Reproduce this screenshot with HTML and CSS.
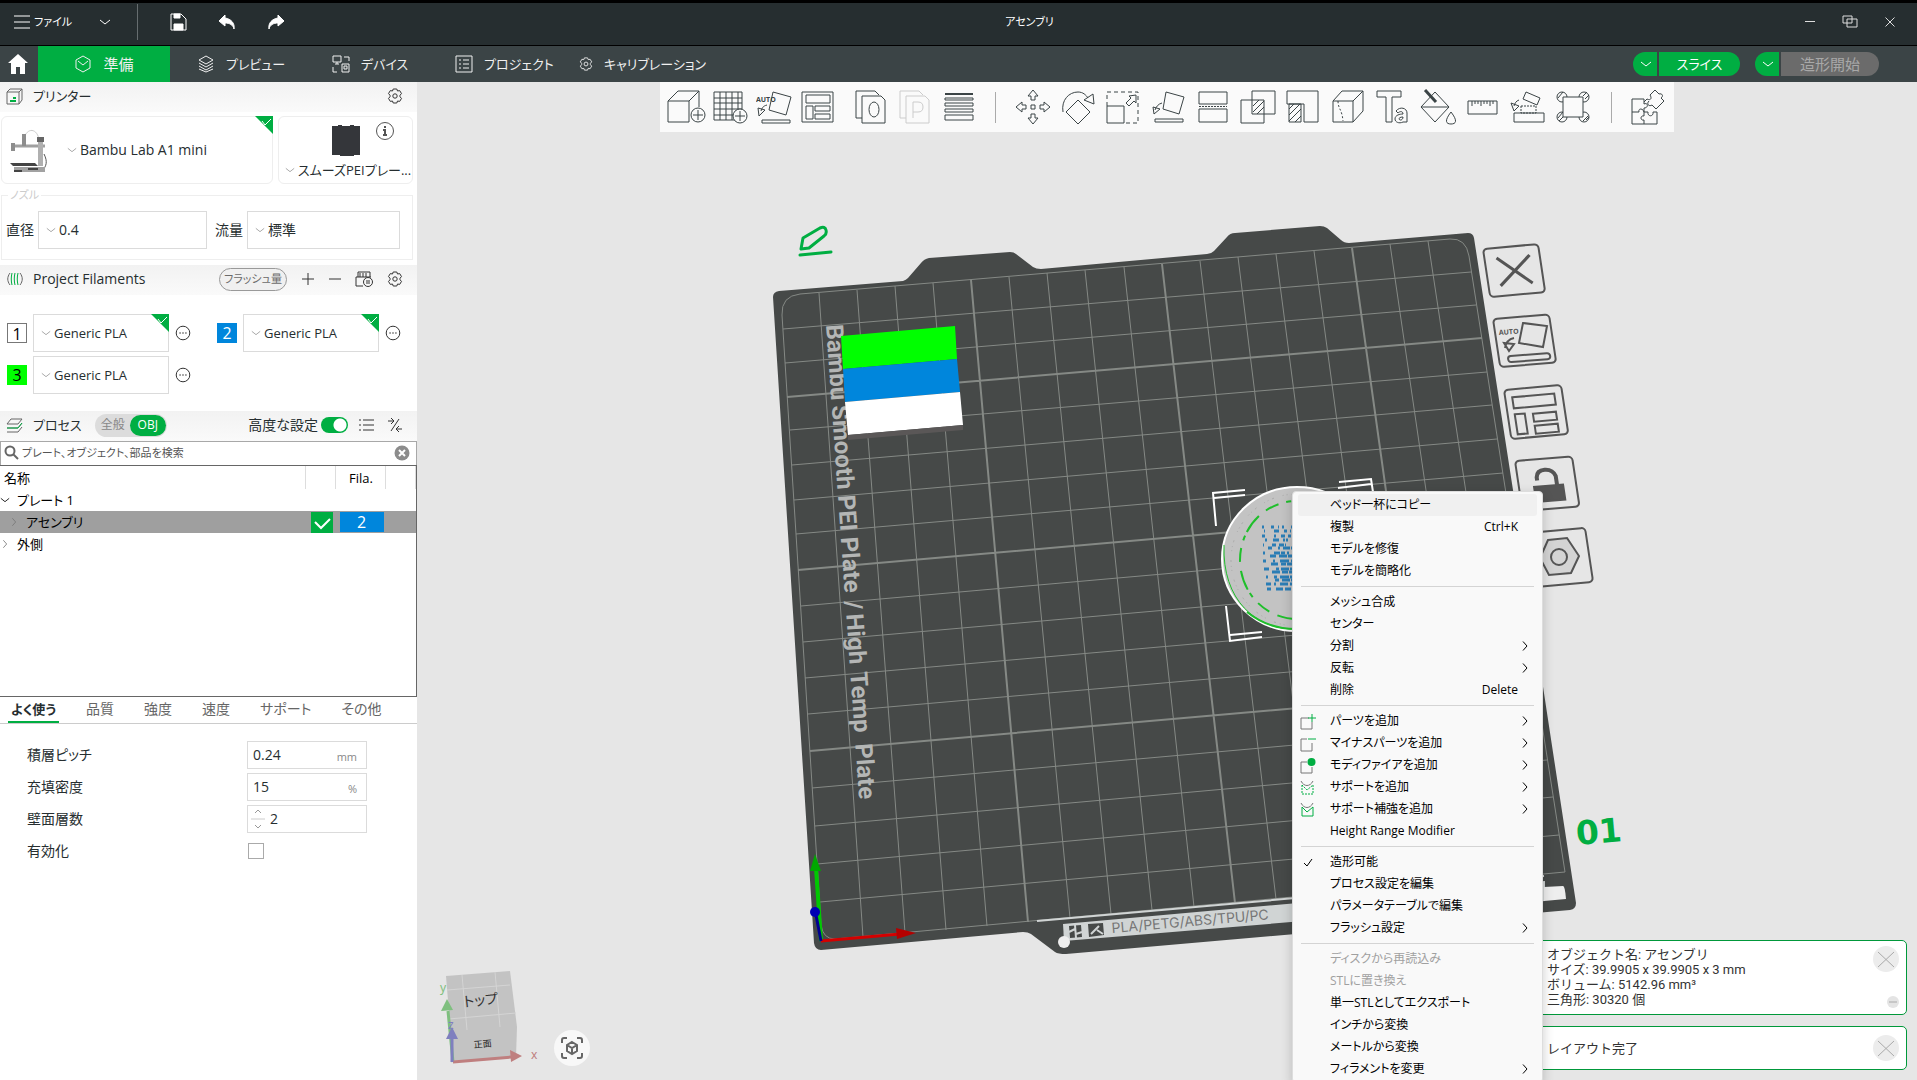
FILE: index.html
```html
<!DOCTYPE html>
<html lang="ja">
<head>
<meta charset="utf-8">
<title>アセンブリ</title>
<link rel="stylesheet" href="styles.css">
</head>
<body>
<svg class="defs" aria-hidden="true">
  <symbol id="chev" viewBox="0 0 12 12"><path d="M1 4l5 4 5-4"/></symbol>
  <symbol id="right" viewBox="0 0 12 12"><path d="M4 1.500l4 4.500-4 4.500"/></symbol>
  <symbol id="tick" viewBox="0 0 18 18"><path d="M0 0h18v18z" fill="#00ae42" stroke="none"/><path d="M7 5l3 4 6-6" stroke="#fff"/></symbol>
  <symbol id="gear" viewBox="0 0 16 16"><path d="M6.200 1h3.600l.7 2 2.200-.4 1.800 3L13 7.200v1.600l1.500 1.600-1.800 3-2.200-.4-.7 2H6.200l-.7-2-2.200.4-1.800-3L3 8.800V7.200L1.500 5.600l1.800-3 2.200.4z"/><circle cx="8" cy="8" r="2.200"/></symbol>
  <symbol id="more" viewBox="0 0 16 16"><circle cx="8" cy="8" r="6.800"/><path d="M4.300 8h1.600M7.200 8h1.600M10.100 8h1.600"/></symbol>
  <symbol id="lay" viewBox="0 0 36 36"><path d="M16 3l18 5-5 17-16-5zM5 30h28v3H5zM12 14c-4 1-6 4-7 7M3 18l1 7 6-5z"/></symbol>
</svg>

<header class="titlebar">
  <button class="file"><svg width="16" height="14"><path d="M0 1h16M0 7h16M0 13h16"/></svg>ファイル<svg class="drop" width="12" height="12"><use href="#chev"/></svg></button>
  <span class="bar"></span>
  <div class="quick">
    <button aria-label="保存"><svg width="17" height="18"><path d="M1 1h10l5 5v11H1z"/><path d="M4 11h9v6H4zM4 1h6v4H4z" fill="#fff"/></svg></button>
    <button aria-label="元に戻す"><svg width="18" height="16"><path d="M7 1L1 7l6 5V9c5 0 8 2 9 6 1-6-3-10-9-11z" fill="#fff"/></svg></button>
    <button aria-label="やり直す"><svg width="18" height="16"><path d="M11 1l6 6-6 5V9c-5 0-8 2-9 6-1-6 3-10 9-11z" fill="#fff"/></svg></button>
  </div>
  <h1>アセンブリ</h1>
  <div class="win">
    <button aria-label="最小化"><svg width="12" height="12"><path d="M1 5.500h10"/></svg></button>
    <button aria-label="元のサイズに戻す"><svg width="16" height="14"><path d="M1 1h9v7H1zM5 4h10v8H5z"/></svg></button>
    <button aria-label="閉じる"><svg width="12" height="12"><path d="M1.500 1.500l9 9M10.500 1.500l-9 9"/></svg></button>
  </div>
</header>

<nav class="tabs">
  <button class="home" aria-label="ホーム"><svg width="20" height="20"><path d="M10 0L0 9h3v11h5v-7h4v7h5V9h3z" fill="#fff" stroke="none"/></svg></button>
  <button class="tab on"><svg width="18" height="18"><path d="M9 1l7 4v8l-7 4-7-4V5zM4 6l5 4 5-4"/></svg>準備</button>
  <button class="tab t2"><svg width="18" height="18"><path d="M9 1l7 4-7 4-7-4zM2 8l7 4 7-4M2 11l7 4 7-4M2 14l7 3 7-3"/></svg>プレビュー</button>
  <button class="tab t3"><svg width="18" height="18"><path d="M1 1h8v6H1zM3 9h4M5 7v2M12 2h5v4M1 12v5h4M10 9h7v8h-7zM12 11h3v3h-3z"/></svg>デバイス</button>
  <button class="tab t4"><svg width="18" height="18"><path d="M1 1h16v16H1zM4 5h2M8 5h6M4 9h2M8 9h6M4 13h2M8 13h6"/></svg>プロジェクト</button>
  <button class="tab t5"><svg width="14" height="14"><use href="#gear"/></svg>キャリブレーション</button>
  <div class="run">
    <button class="half" aria-label="スライス設定"><svg width="14" height="12"><use href="#chev"/></svg></button><button class="go">スライス</button>
    <button class="half next" aria-label="造形設定"><svg width="14" height="12"><use href="#chev"/></svg></button><button class="go off">造形開始</button>
  </div>
</nav>

<main>
<aside>
  <section>
    <div class="head"><svg class="hi" width="17" height="17"><path d="M1 4l3-3h12v11l-3 4H1zM1 4h12v12M13 4l3-3"/><path d="M4 13h6M7 10h3" stroke="#00ae42" stroke-width="2"/></svg><h2>プリンター</h2><button class="ic push" aria-label="プリンター設定"><svg width="16" height="16"><use href="#gear"/></svg></button></div>
    <div class="cards">
      <div class="card printer">
        <svg class="photo" width="38" height="48"><path d="M14 14C15 3 26 0 29 13" stroke="#ccc"/><path d="M1 20h34" stroke="#a0a0a0" stroke-width="3"/><path d="M14 8v12M3 17v8" stroke="#8d8d8d" stroke-width="4"/><path d="M27 11h7v5h-7z" fill="#666" stroke="none"/><path d="M28 16h5v24h-5z" fill="#b0b0b0" stroke="none"/><path d="M34 28c4 8 2 12-1 16" stroke="#555"/><path d="M0 37h25l3 3H3z" fill="#444" stroke="none"/><path d="M4 41h31v5H4z" fill="#a2a2a2" stroke="none"/><path d="M4 45h8M18 43h10" stroke="#444" stroke-width="2"/></svg>
        <label class="sel"><svg width="10" height="12"><use href="#chev"/></svg><select aria-label="プリンター"><option>Bambu Lab A1 mini</option></select></label>
        <svg class="corner" width="18" height="18"><use href="#tick"/></svg>
      </div>
      <div class="card plate">
        <svg class="pimg" width="28" height="31"><path d="M0 1h6V0h4v1h8V0h4v1h6v29h-6v1H8v-1H0z" fill="#34363a" stroke="none"/></svg>
        <svg class="info" width="20" height="20"><circle cx="10" cy="10" r="8.500"/><path d="M10 5v2M8 9h2v5M8 14h4" stroke-width="2"/></svg>
        <label class="sel"><svg width="10" height="12"><use href="#chev"/></svg><select aria-label="プレートの種類"><option>スムーズPEIプレー...</option></select></label>
      </div>
    </div>
    <fieldset>
      <legend>ノズル</legend>
      <label for="dia">直径</label><span class="sel box dia"><svg width="10" height="12"><use href="#chev"/></svg><select id="dia"><option>0.4</option></select></span>
      <label for="flow">流量</label><span class="sel box flow"><svg width="10" height="12"><use href="#chev"/></svg><select id="flow"><option>標準</option></select></span>
    </fieldset>
  </section>

  <section>
    <div class="head"><svg class="hi" width="17" height="17"><path d="M4 2C1 6 1 10 4 14M14 2c3 4 3 8 0 12"/><path d="M6 2c-1 4-1 8 0 12M9 2c-1 4-1 8 0 12M12 2c-1 4-1 8 0 12" stroke="#00ae42"/></svg><h2 class="en">Project Filaments</h2>
      <div class="tools push"><button class="flush">フラッシュ量</button>
      <button class="ic" aria-label="追加"><svg width="14" height="14"><path d="M7 1v12M1 7h12"/></svg></button>
      <button class="ic" aria-label="削除"><svg width="14" height="14"><path d="M1 7h12"/></svg></button>
      <button class="ic" aria-label="AMS同期"><svg width="19" height="17"><path d="M3 6V1h12v5M1 6h15M1 6v9h7M5 2v4M8 2v4M11 2v4"/><circle cx="13" cy="11" r="4.500"/><path d="M11 10h4M11 12h4"/></svg></button>
      <button class="ic" aria-label="フィラメント設定"><svg width="16" height="16"><use href="#gear"/></svg></button></div>
    </div>
    <div class="fils">
      <div class="fil"><span class="sw w">1</span><label class="sel box"><svg width="10" height="12"><use href="#chev"/></svg><select aria-label="フィラメント1"><option>Generic PLA</option></select><svg class="corner" width="18" height="18"><use href="#tick"/></svg></label><button class="ic" aria-label="詳細"><svg width="16" height="16"><use href="#more"/></svg></button></div>
      <div class="fil"><span class="sw b">2</span><label class="sel box"><svg width="10" height="12"><use href="#chev"/></svg><select aria-label="フィラメント2"><option>Generic PLA</option></select><svg class="corner" width="18" height="18"><use href="#tick"/></svg></label><button class="ic" aria-label="詳細"><svg width="16" height="16"><use href="#more"/></svg></button></div>
      <div class="fil"><span class="sw g">3</span><label class="sel box"><svg width="10" height="12"><use href="#chev"/></svg><select aria-label="フィラメント3"><option>Generic PLA</option></select></label><button class="ic" aria-label="詳細"><svg width="16" height="16"><use href="#more"/></svg></button></div>
    </div>
  </section>

  <section>
    <div class="head"><svg class="hi" width="17" height="17"><path d="M5 2h11l-4 5H1zM1 11h11l4-5M1 15h11l4-5"/><path d="M1 11h11l4-5" stroke="#00ae42"/></svg><h2>プロセス</h2>
      <div class="scope"><button>全般</button><button class="on">OBJ</button></div>
      <label class="adv push" for="adv">高度な設定</label><input id="adv" class="switch" type="checkbox" checked>
      <button class="ic lst" aria-label="一覧"><svg width="16" height="14"><path d="M0 2h2M4 2h11M0 7h2M4 7h11M0 12h2M4 12h11"/></svg></button>
      <button class="ic" aria-label="比較"><svg width="16" height="16"><path d="M12 2L4 14M1 4h5M4 1l3 3-3 3M15 12h-5M12 9l-3 3 3 3"/></svg></button>
    </div>
    <div class="search"><svg width="15" height="15"><circle cx="6" cy="6" r="4.500" stroke-width="2"/><path d="M9.500 9.500l4.500 4.500" stroke-width="2"/></svg><input type="text" aria-label="検索" placeholder="プレート、オブジェクト、部品を検索"><button aria-label="クリア"><svg width="16" height="16"><circle cx="8" cy="8" r="7.500" fill="#8c8c8c" stroke="none"/><path d="M5 5l6 6M11 5l-6 6" stroke="#fff" stroke-width="2"/></svg></button></div>
    <div class="tree">
      <table>
        <colgroup><col><col class="c2"><col class="c3"><col class="c4"></colgroup>
        <thead><tr><th>名称</th><th></th><th class="fc">Fila.</th><th></th></tr></thead>
        <tbody>
          <tr><td><svg width="10" height="10" class="dk"><use href="#chev"/></svg>プレート 1</td><td></td><td></td><td></td></tr>
          <tr class="cur"><td class="in"><svg width="10" height="10"><use href="#right"/></svg>アセンブリ</td><td class="ck"><svg width="22" height="21"><path d="M0 0h22v21H0z" fill="#00ae42" stroke="none"/><path d="M4 10l6 6 9-9" stroke="#fff" stroke-width="2"/></svg></td><td class="fl"><span>2</span></td><td></td></tr>
          <tr><td><svg width="10" height="10"><use href="#right"/></svg>外側</td><td></td><td></td><td></td></tr>
        </tbody>
      </table>
    </div>
    <div class="ptabs"><button class="on">よく使う</button><button>品質</button><button>強度</button><button>速度</button><button>サポート</button><button>その他</button></div>
    <div class="params">
      <label for="p1">積層ピッチ</label><span class="num"><input id="p1" type="text" value="0.24"><i>mm</i></span>
      <label for="p2">充填密度</label><span class="num"><input id="p2" type="text" value="15"><i>%</i></span>
      <label for="p3">壁面層数</label><span class="num spin"><svg width="16" height="22"><path d="M5 5l3-3 3 3M5 17l3 3 3-3"/><path d="M1 11h14" stroke="#ccc"/></svg><input id="p3" type="text" value="2"></span>
      <label for="p4">有効化</label><input id="p4" class="chk" type="checkbox">
    </div>
  </section>
</aside>

<div class="view">
<svg class="scene" viewBox="417 82 1500 998" preserveAspectRatio="xMidYMin slice">
  <path class="bed" d="M773 297q0-5 6-6L903 281q3-1 5-3l13-15q3-4 8-5L1010 252q4 0 6 2l17 13q3 2 8 2L1207 254q4 0 7-3l13-14q3-4 8-4L1320 226q4 0 7 2l14 12q3 3 8 3L1468 233q5 0 6 5L1513 490 1576 903q0 6-6 7L1066 954q-8 0-11-2L1031 934q-3-2-8-2L821 950q-6 0-7-7z"/>
  <g class="grid">
    <path d="M819 293L863 937M857 290L905 933M895 286L946 930M933 283L987 926M1009 277L1070 918M1047 273L1111 914M1085 270L1152 910M1124 267L1194 907M1200 261L1276 899M1238 257L1317 895M1276 254L1359 891M1314 251L1400 887M1390 244L1483 880M1428 241L1524 876"/>
    <path d="M783 329L1471 272M785 363L1476 305M790 430L1487 372M792 465L1492 405M794 500L1497 439M796 534L1503 473M801 606L1514 543M803 642L1519 579M805 678L1525 615M808 714L1530 651M812 788L1542 723M815 826L1547 760M817 864L1553 797M820 902L1559 835"/>
    <path class="b" d="M971 280L1028 922M1162 264L1235 903M1352 248L1441 884M787 397L1482 338M798 570L1508 508M810 751L1536 687"/>
    <path d="M782 315Q781 296 800 294L1450 239Q1466 238 1469 256L1565 872 835 939Q823 939 821 925z"/>
  </g>
  <g class="mark" transform="translate(826 325) rotate(86)">
    <text x="0">Bambu</text><text x="81">Smooth</text><text x="171">PEI</text><text x="213">Plate</text><text x="277">/</text><text x="290">High</text><text x="348">Temp</text><text x="420">Plate</text>
  </g>
  <path d="M841 336L955 326 957 359 843 369z" fill="#0f0"/><path d="M843 369L957 359 960 392 845 402z" fill="#0086dc"/><path d="M845 402L960 392 963 425 848 435z" fill="#fff"/><path d="M848 435L963 425v5L848 440z" fill="#5a5757"/>
  <path d="M1037 921L1544 876" stroke="#d0d4d4" stroke-width="2"/>
  <path d="M1063 924L1545 881v20L1064 941z" fill="#d0d4d4"/><path d="M1544 887L1563 886q2 0 3 13l-22 2z" fill="#eee"/><circle cx="1064" cy="942" r="6" fill="#eee"/>
  <path d="M1069 926l12-1 1 12-12 1zM1088 924l15-1 1 12-15 2z" fill="#464948"/><path d="M1075 925l1 13M1069 932l6-3M1076 934l6-2M1091 934l8-8M1097 930l6 4" stroke="#d0d4d4" stroke-width="2"/>
  <text class="mat" transform="translate(1112 933) rotate(-5)">PLA/PETG/ABS/TPU/PC</text>
  <path d="M821 941L816 868" stroke="#00c800" stroke-width="4"/><path d="M810 871l5-17 6 17z" fill="#00a800"/>
  <path d="M821 941L900 934" stroke="#d40000" stroke-width="3"/><path d="M896 928l20 5-19 6z" fill="#b40000"/>
  <path d="M821 941L816 915" stroke="#000090" stroke-width="3"/><circle cx="815" cy="912" r="5" fill="#0000b4"/>

  <ellipse cx="1297" cy="559" rx="75" ry="72" fill="#c3c3c3" stroke="#fff" stroke-width="2"/>
  <path d="M1224 545C1222 600 1256 630 1296 629" class="gl thin"/><path d="M1247 612Q1268 629 1296 629" class="gl"/>
  <ellipse cx="1297" cy="560" rx="57" ry="59" class="gl" stroke-dasharray="14 8 5 4 20 9"/>
  <ellipse cx="1297" cy="560" rx="66" ry="66" fill="none" stroke="#aaa" stroke-dasharray="1 4 2 9 1 3"/>
  <g class="qr">
    <path d="M1262 527h32" stroke-dasharray="2 7 3 4 1 3"/><path d="M1264 531h30" stroke-dasharray="1 9 5 5 3 3"/><path d="M1262 536h32" stroke-dasharray="3 9 2 5 4 3"/><path d="M1265 540h29" stroke-dasharray="2 6 6 4 2 1"/><path d="M1263 545h31" stroke-dasharray="1 8 4 3 5 1"/><path d="M1268 548h26" stroke-dasharray="4 6 2 3 7 1"/><path d="M1263 553h31" stroke-dasharray="2 9 6 1 4 2"/><path d="M1270 556h24" stroke-dasharray="6 3 8 1"/><path d="M1263 561h31" stroke-dasharray="3 7 2 5 9 2"/><path d="M1271 564h23" stroke-dasharray="7 3 5 1"/><path d="M1264 569h30" stroke-dasharray="5 7 3 2 8 1"/><path d="M1272 572h22" stroke-dasharray="8 2 6 1"/><path d="M1266 577h28" stroke-dasharray="2 6 3 3 9 1"/><path d="M1275 580h19" stroke-dasharray="4 3 8 1"/><path d="M1266 584h28" stroke-dasharray="5 3 2 4 8 2"/><path d="M1267 589h27" stroke-dasharray="4 5 7 2 6 1"/>
  </g>
  <path class="sel3" d="M1245 490L1213 493 1216 526M1214 498L1245 495M1339 482L1371 479 1373 492M1338 488L1371 484M1226 606L1230 641 1262 637M1230 635L1262 632"/>

  <path d="M801 249l2-11 17-10q5-2 6 2 1 4-2 6l-15 12zM800 255L831 252" class="edit"/>
  <g class="pb">
    <g transform="matrix(1 -.09 .15 1 1483 249)"><rect width="55" height="48" rx="4"/><path d="M12 10l32 28M45 10L12 38" stroke-width="3"/></g>
    <g transform="matrix(1 -.08 .15 1 1493 319)"><rect width="56" height="48" rx="4"/><rect x="9" y="38" width="42" height="6" rx="3"/></g>
    <path d="M1523 323l24 3-4 21-24-4zM1514 338c-5 1-8 4-9 10M1504 343l5 8 5-7z"/>
    <text x="1499" y="335" transform="rotate(-4 1499 335)">AUTO</text>
    <g transform="matrix(1 -.09 .15 1 1504 390)"><rect width="57" height="49" rx="4"/><path d="M7 8h42v11H7zM7 25h10v20H7zM25 26h23v8H25zM25 38h23v8H25z"/></g>
    <g transform="matrix(1 -.08 .15 1 1515 461)"><rect width="57" height="50" rx="4"/><path d="M15 27h29v15H15z" fill="#555"/><path d="M19 21v-3q1-7 9-7t10 7v10" stroke-width="4"/></g>
    <g transform="matrix(1 -.09 .15 1 1527 533)"><rect width="58" height="54" rx="4"/></g>
    <path d="M1548 540l19-2 12 18-8 17-22 2-9-17z" fill="#d4d4d4"/><circle cx="1559" cy="557" r="8"/>
  </g>
  <text class="no" transform="translate(1577 845) rotate(-5)">01</text>

  <path d="M446 976L510 971 517 1027 516 1057 453 1062z" fill="#c3c3c3"/>
  <path d="M447 990l63-5M449 1019l67-6M462 975l5 55M495 972l5 55" stroke="#d4d4d4" fill="none"/>
  <text class="top" transform="translate(464 1007) rotate(-6)">トップ</text><text class="front" transform="translate(474 1048) rotate(-5)">正面</text>
  <path d="M453 1062L448 1011" stroke="#7fbf7f" stroke-width="3"/><path d="M441 1011l6-12 6 11z" fill="#7fbf7f"/>
  <path d="M453 1062L512 1057" stroke="#bf7f7f" stroke-width="3"/><path d="M510 1050l12 6-11 6z" fill="#bf7f7f"/>
  <path d="M452 1062V1038" stroke="#7f7fbf" stroke-width="3"/><path d="M446 1039l6-12 6 12z" fill="#7f7fbf"/>
  <text class="ax" x="440" y="992" fill="#7fbf7f">y</text><text class="ax" x="448" y="1029" fill="#7f7fbf">z</text><text class="ax" x="531" y="1059" fill="#bf7f7f">x</text>
  <circle cx="572" cy="1048" r="18" fill="#f8f8f8"/>
  <path d="M562 1043v-3q0-2 2-2h3M577 1038h3q2 0 2 2v3M582 1053v3q0 2-2 2h-3M567 1058h-3q-2 0-2-2v-3M572 1042l5 3v6l-5 3-5-3v-6zM567 1045l5 3 5-3M572 1048v6" fill="none" stroke="#666" stroke-width="2"/>
</svg>

<div class="toolbar">
  <div class="g1">
    <button aria-label="追加"><svg width="40" height="36"><path d="M2 12h21v21H2zM2 12L12 2h21L23 12M33 2v16"/><circle cx="32" cy="26" r="7"/><path d="M32 21v10M27 26h10"/></svg></button>
    <button aria-label="プレート追加"><svg width="36" height="36"><path d="M2 3h28v28H2zM8 3v28M14 3v28M20 3v28M26 3v28M2 9h28M2 14h28M2 20h28M2 26h28"/><circle cx="28" cy="27" r="7" fill="#fafafa"/><path d="M28 22v10M23 27h10"/></svg></button>
    <button aria-label="自動方向調整"><svg width="36" height="36"><path d="M17 3l18 5-5 18-17-5zM6 31h28v3H6zM11 16c-4 1-5 3-6 6M2 19l1 8 6-6z"/><text x="0" y="13">AUTO</text></svg></button>
    <button aria-label="レイアウト"><svg width="34" height="36"><path d="M1 3h31v30H1zM5 6h24v8H5zM5 17h7v13H5zM14 17h15v5H14zM14 25h15v5H14z"/></svg></button>
  </div>
  <div class="g1 g2">
    <button aria-label="オブジェクト分割"><svg width="32" height="36"><path d="M7 29H1V2h19l4 4"/><path d="M7 7h19l4 4v23H7z"/><ellipse cx="19" cy="20.500" rx="5" ry="7.500"/></svg></button>
    <button aria-label="パーツ分割" disabled><svg width="32" height="36"><path d="M7 29H1V2h19l4 4"/><path d="M7 7h19l4 4v23H7z"/><path d="M14 29V13h5q5 0 5 5t-5 5h-5"/></svg></button>
    <button aria-label="可変レイヤー"><svg width="30" height="36"><path d="M1 5h28" stroke-width="2"/><path d="M1 9h28v2H1zM1 14h28v3H1zM1 20h28v3H1zM1 26h28v5H1z"/></svg></button>
  </div>
  <span class="sep s1"></span>
  <div class="g3">
    <button aria-label="移動"><svg width="36" height="36"><path d="M16 16h4v4h-4zM18 1l5 6h-3v4h-4V7h-3zM18 35l5-6h-3v-4h-4v4h-3zM1 18l6-5v3h4v4H7v3zM35 18l-6-5v3h-4v4h4v3z"/></svg></button>
    <button aria-label="回転"><svg width="36" height="36"><path d="M18 11l12 12-12 12L6 23zM3 23C1 11 9 3 18 3c5 0 8 3 10 6M24 11l9-6 1 10z"/></svg></button>
    <button aria-label="スケール"><svg width="36" height="36"><path d="M2 17h17v17H2z"/><path d="M2 17V3h31v31H19" stroke-dasharray="4 3"/><path d="M21 14l5-5-2-2 7-1v8l-2-2-5 5z"/></svg></button>
    <button aria-label="底面選択"><svg width="36" height="36"><use href="#lay"/></svg></button>
    <button aria-label="カット"><svg width="32" height="36"><path d="M2 3h28v12H2zM2 20h28v13H2z"/><path d="M2 17.500h28" stroke-dasharray="2 1"/></svg></button>
    <button aria-label="ブーリアン"><svg width="36" height="36"><path d="M12 2h23v23H12zM1 11h23v23H1zM13 17l6-6M13 23l11-11M17 25l7-7"/></svg></button>
    <button aria-label="サポート"><svg width="34" height="36"><path d="M1 2h31v31H18V15H1zM3 15h12v18H3zM3 20l5-5M3 26l11-11M3 32l12-12M9 33l6-6"/></svg></button>
    <button aria-label="継ぎ目"><svg width="34" height="36"><path d="M2 12h20v21H2zM2 12L11 2h21L22 12M32 2v20L22 33"/><path d="M7 12c0 8 4 8 5 20" stroke-dasharray="2 2"/></svg></button>
    <button aria-label="テキスト"><svg width="36" height="36"><path d="M2 2h24v6h-9v25h-6V8H2zM21 22c4-5 11-3 11 2v9h-4c-4 2-8 0-8-3 0-4 5-5 8-5 0-3-3-3-5-1zM28 28c-3 0-4 1-4 2 1 2 4 1 4-2z"/></svg></button>
    <button aria-label="カラーペイント"><svg width="38" height="36"><path d="M16 3l14 15-14 15L2 18zM2 18h28M32 23c7 9 5 12 0 12s-7-3 0-12z"/><path d="M6 1l11 12" stroke-width="3"/></svg></button>
    <button aria-label="測定"><svg width="32" height="36"><path d="M1 12h29v13H1zM5 12v5M8 12v3M11 12v3M14 12v5M17 12v3M20 12v3M23 12v5M26 12v3"/></svg></button>
    <button aria-label="組立"><svg width="36" height="36"><path d="M4 24h30v9H4zM16 3l14 6-3 7-14-6zM9 11c-3 1-4 3-5 6M1 14l3 8 5-5z"/><path d="M11 17h15v7H11z" stroke-dasharray="2 1"/></svg></button>
    <button aria-label="ブリム"><svg width="34" height="36"><circle cx="6" cy="8" r="5"/><circle cx="28" cy="8" r="5"/><circle cx="6" cy="28" r="5"/><circle cx="28" cy="28" r="5"/><path d="M2 9l5-6M2 29l5-6M3 32l4-4M27 32l5-5M27 7l4-4M29 10l4-4M30 31l3-3"/><path d="M7 8h20v20H7z" fill="#fafafa"/></svg></button>
  </div>
  <span class="sep"></span>
  <div class="g1 g4"><button aria-label="アセンブリビュー"><svg width="36" height="36"><path d="M2 10h12v5c4-2 5 4 0 4v4c-1-4-6-4-5 0H2zM2 23v12h12v-4c-4 1-4-5 0-4v-4M14 23h4c-1 5 6 5 5 0h4v12H14M14 13l3-3c4 2 5-1 3-4l5-5 4 4c3-1 5 2 2 4l3 3-8 8-4-4c-3 2-6-1-3-4"/></svg></button></div>
</div>

<div class="notes">
  <div class="note big"><p>オブジェクト名: アセンブリ<br>サイズ: 39.9905 x 39.9905 x 3 mm<br>ボリューム: 5142.96 mm³<br>三角形: 30320 個</p><div class="nb"><button class="x" aria-label="閉じる"><svg width="26" height="26"><circle cx="13" cy="13" r="13" fill="#ececec" stroke="none"/><path d="M5 6l16 15M21 6L5 21"/></svg></button><button class="m" aria-label="最小化"><svg width="12" height="12"><circle cx="6" cy="6" r="6" fill="#e4e4e4" stroke="none"/><path d="M2 6h8"/></svg></button></div></div>
  <div class="note"><p>レイアウト完了</p><div class="nb"><button class="x" aria-label="閉じる"><svg width="26" height="26"><circle cx="13" cy="13" r="13" fill="#ececec" stroke="none"/><path d="M5 6l16 15M21 6L5 21"/></svg></button></div></div>
</div>

<div class="menu" role="menu">
  <button class="hov">ベッド一杯にコピー</button>
  <button>複製<kbd>Ctrl+K</kbd></button>
  <button>モデルを修復</button>
  <button>モデルを簡略化</button>
  <hr>
  <button>メッシュ合成</button>
  <button>センター</button>
  <button>分割<svg class="r" width="12" height="12"><use href="#right"/></svg></button>
  <button>反転<svg class="r" width="12" height="12"><use href="#right"/></svg></button>
  <button>削除<kbd>Delete</kbd></button>
  <hr>
  <button><svg class="i" width="16" height="16"><path d="M9 4H1v11h11V8"/><path d="M12 0v8M8 4h8" class="gr"/></svg>パーツを追加<svg class="r" width="12" height="12"><use href="#right"/></svg></button>
  <button><svg class="i" width="16" height="16"><path d="M7 3H1v12h11V7"/><path d="M8 3h8" class="gr"/></svg>マイナスパーツを追加<svg class="r" width="12" height="12"><use href="#right"/></svg></button>
  <button><svg class="i" width="16" height="16"><path d="M7 4H1v11h11V9"/><circle cx="11.500" cy="4" r="4" fill="#00ae42" stroke="none"/></svg>モディファイアを追加<svg class="r" width="12" height="12"><use href="#right"/></svg></button>
  <button><svg class="i" width="16" height="16"><path d="M1 1c3 6 9 6 12 0"/><path d="M2 5v9h11V5L7 10z" class="gr" stroke-dasharray="2 1"/></svg>サポートを追加<svg class="r" width="12" height="12"><use href="#right"/></svg></button>
  <button><svg class="i" width="16" height="16"><path d="M1 1c3 6 9 6 12 0"/><path d="M2 5v9h11V5L7 10z" class="gr"/></svg>サポート補強を追加<svg class="r" width="12" height="12"><use href="#right"/></svg></button>
  <button>Height Range Modifier</button>
  <hr>
  <button><svg class="i dk" width="16" height="16"><path d="M4 8l3 3 5-7"/></svg>造形可能</button>
  <button>プロセス設定を編集</button>
  <button>パラメータテーブルで編集</button>
  <button>フラッシュ設定<svg class="r" width="12" height="12"><use href="#right"/></svg></button>
  <hr>
  <button disabled>ディスクから再読込み</button>
  <button disabled>STLに置き換え</button>
  <button>単一STLとしてエクスポート</button>
  <button>インチから変換</button>
  <button>メートルから変換</button>
  <button>フィラメントを変更<svg class="r" width="12" height="12"><use href="#right"/></svg></button>
</div>
</div>
</main>
</body>
</html>
```
FILE: styles.css
```css
* { box-sizing: border-box; }
body { margin: 0; height: 100vh; overflow: hidden; display: flex; flex-direction: column; border-top: 3px solid #000; background: #e6e6e6; color: #262e30; font: 14px/20px "Open Sans", "Noto Sans CJK JP", sans-serif; font-feature-settings: "palt"; }
button, input, select { font: inherit; font-feature-settings: inherit; color: inherit; background: none; border: 0; padding: 0; margin: 0; }
h1, h2, p { margin: 0; font-weight: 400; }
svg { fill: none; stroke: currentColor; display: block; flex: none; }
svg text { stroke: none; }
.defs { position: absolute; width: 0; height: 0; }

.titlebar { display: flex; align-items: center; height: 43px; background: #262e30; color: #fff; border-bottom: 1px solid #000; flex: none; padding-bottom: 4px; }
.file { display: flex; align-items: center; gap: 4px; padding-left: 14px; width: 137px; font-size: 11px; }
.file .drop { margin-left: auto; margin-right: 26px; }
.bar { width: 1px; height: 36px; background: #666d6f; }
.quick, .win { display: flex; }
.quick { padding-left: 20px; }
.quick button, .win button { width: 40px; display: flex; justify-content: center; align-items: center; padding: 0 4px; }
.quick button { margin-right: 9px; }
.titlebar h1 { flex: 1; text-align: center; font-size: 11px; padding-right: 26px; }
.win { padding: 0 7px 0 10px; color: #ddd; }

.tabs { display: flex; height: 36px; background: #3b4446; color: #fff; flex: none; font-size: 13px; }
.home { width: 38px; padding-left: 8px; }
.tab { display: flex; align-items: center; gap: 11px; padding: 0; color: #f0f0f0; }
.tab.on { width: 132px; justify-content: center; background: #00ae42; font-size: 15px; }
.t2 { width: 162px; padding-left: 27px; }
.t3 { width: 123px; }
.t4 { width: 124px; }
.run { margin-left: auto; display: flex; align-items: center; padding-right: 38px; }
.run button { height: 24px; line-height: 22px; }
.half { width: 24px; background: #00ae42; border-radius: 12px 0 0 12px; padding-left: 6px; margin-right: 2px; }
.run .half { padding-left: 6px; }
.run .next { margin-left: 15px; }
.go { background: #00ae42; width: 81px; border-radius: 0 12px 12px 0; }
.go.off { width: 98px; background: #6b6b6b; color: #a8a8a8; font-size: 15px; }

main { flex: 1; display: flex; min-height: 0; }
aside { width: 417px; flex: none; background: #fff; }
.head { height: 30px; display: flex; align-items: center; background: linear-gradient(#f2f2f2, #fafafa); padding: 0 14px 2px 6px; }
.head h2 { font-size: 13px; margin-left: 10px; }
.head h2.en { font-size: 14px; }
.hi { color: #666; }
.push { margin-left: auto; }
.head .push { margin-left: auto; }
.ic { display: flex; color: #333; }
.cards { display: flex; gap: 5px; padding: 4px 4px 0 1px; }
.card { height: 68px; border: 1px solid #eee; border-radius: 6px; position: relative; display: flex; align-items: center; }
.printer { flex: 2; padding-left: 8px; }
.printer .sel { margin-left: 19px; font-size: 14px; }
.corner { position: absolute; right: -1px; top: -1px; }
.plate { width: 135px; flex-direction: column; padding-top: 8px; font-size: 13px; }
.plate .sel { margin-top: 4px; padding-left: 6px; }
.info { position: absolute; right: 17px; top: 4px; color: #555; }
.sel { display: flex; align-items: center; gap: 3px; position: relative; }
.sel > svg:first-child { color: #999; }
select { appearance: none; line-height: 20px; }
fieldset { margin: 4px 4px 5px 1px; height: 72px; border: 1px solid #eee; padding: 0 0 1px 4px; display: flex; align-items: center; min-width: 0; }
legend { font-size: 11px; color: #ccc; padding: 0 2px; margin-left: 2px; line-height: 14px; }
.box { border: 1px solid #dbdbdb; height: 38px; padding-left: 7px; background: #fff; }
.dia { width: 169px; margin: 0 8px 0 4px; }
.flow { width: 153px; margin-left: 4px; }
.tools { display: flex; align-items: center; gap: 13px; }
.flush { border: 1px solid #999; border-radius: 12px; width: 68px; height: 23px; font-size: 11px; line-height: 20px; color: #6b6b6b; background: #f0f0f0; margin-right: 1px; }
.fils { display: grid; grid-template-columns: 210px 1fr; row-gap: 4px; padding: 19px 0 17px 7px; }
.fil { display: flex; align-items: center; }
.fil .box { width: 136px; margin: 0 6px; font-size: 13px; }
.sw { width: 20px; height: 20px; text-align: center; font-size: 16px; line-height: 21px; color: #000; }
.w { border: 1px solid #777; } .b { background: #0086dc; color: #fff; } .g { background: #0f0; }
.scope { display: flex; margin-left: 13px; height: 23px; border-radius: 12px; background: #dcdcdc; padding: 1px; font-size: 12px; color: #888; }
.scope button { width: 34px; line-height: 20px; }
.scope .on { background: #00ae42; color: #fff; border-radius: 11px; width: 36px; }
.switch { appearance: none; width: 27px; height: 16px; border-radius: 8px; margin: 0 11px 0 3px; background: radial-gradient(circle at 19px 8px, #fff 6px, #00ae42 7px); }
.lst { margin-right: 12px; }
.search { display: flex; align-items: center; height: 24px; border: 1px solid #a8a8a8; border-bottom: 0; padding: 0 6px 2px 3px; gap: 3px; color: #666; font-size: 11px; }
.search input { flex: 1; outline: 0; }
.search input::placeholder { color: #555; }
.tree { height: 232px; border: 1px solid #666; border-left: 0; }
table { width: 100%; border-collapse: collapse; table-layout: fixed; color: #000; font-size: 13px; }
.c2, .c4 { width: 30px; } .c3 { width: 50px; }
th, td { padding: 0; height: 22px; line-height: 20px; text-align: left; font-weight: 400; }
th { height: 23px; border-right: 1px solid #ddd; padding-left: 4px; }
th.fc { padding-left: 13px; }
td svg { display: inline-block; margin-right: 7px; color: #777; }
td svg.dk { color: #000; }
.in { padding-left: 9px; }
.cur { background: #9f9f9f; }
.ck { padding-left: 5px; } .ck svg { display: block; margin: 0; }
.fl span { display: block; margin: 0 2px 0 4px; background: #0086dc; color: #fff; text-align: center; font-size: 16px; height: 20px; }
.ptabs { display: flex; height: 27px; border-bottom: 1px solid #ccc; gap: 24px; padding: 0 0 0 8px; color: #666; }
.ptabs button { padding: 0 3px; border-bottom: 2px solid transparent; }
.ptabs .on { font-weight: 700; color: #262e30; border-color: #00ae42; font-size: 13px; }
.params { display: grid; grid-template-columns: 220px 120px; row-gap: 4px; padding: 17px 0 0 27px; align-items: center; }
.num { display: flex; align-items: center; height: 28px; border: 1px solid #dbdbdb; padding: 0 9px 0 5px; }
.num input { flex: 1; min-width: 0; }
.num i { font-style: normal; font-size: 11px; color: #888; padding-top: 4px; }
.spin { padding-left: 2px; gap: 4px; color: #999; } .spin input { color: #262e30; }
.chk { appearance: none; width: 16px; height: 16px; border: 1px solid #aaa; margin: 6px 1px; }
.params label { line-height: 28px; }

.view { flex: 1; position: relative; overflow: hidden; display: flex; justify-content: center; align-items: flex-start; }
.scene { position: absolute; inset: 0; width: 100%; height: 100%; stroke: none; }
.bed { fill: #464948; }
.grid { fill: none; stroke: #858985; stroke-width: 1; }
.grid .b { stroke-width: 2; }
.mark { font: 700 24px Roboto, sans-serif; fill: #b4b6b5; }
.mat { font: 14px Inter, sans-serif; fill: #777; }
.gl { fill: none; stroke: #1fbf2b; stroke-width: 2; }
.gl.thin { stroke-width: 1; }
.qr { fill: none; stroke: #2a7db5; stroke-width: 3; }
.sel3 { fill: none; stroke: #fff; stroke-width: 2; }
.edit { fill: none; stroke: #00ae42; stroke-width: 3; stroke-linecap: round; stroke-linejoin: round; }
.pb { fill: none; stroke: #555; stroke-width: 2; }
.pb text { fill: #555; font: 700 7px "Open Sans", sans-serif; }
.no { font: 700 33px "DejaVu Sans", sans-serif; fill: #00ae42; }
.top { font-size: 14px; fill: #333; } .front { font-size: 9px; fill: #222; }
.ax { font: 12px "Noto Sans", sans-serif; }

.toolbar { position: relative; display: flex; align-items: center; height: 50px; background: #fafafa; padding: 0 4px; color: #3b4446; }
.toolbar div { display: flex; }
.toolbar button { width: 45px; height: 44px; display: flex; align-items: center; justify-content: center; color: inherit; }
.toolbar .g1 button { width: 44px; }
.toolbar button:disabled { color: #ccc; }
.toolbar text { font: 700 7px "Open Sans", sans-serif; fill: #3b4446; }
.g2 { margin-left: 9px; }
.sep { width: 1px; height: 31px; background: #aaa; margin: 0 14px 0 16px; }
.s1 { margin-left: 14px; }

.notes { position: absolute; right: 10px; bottom: 10px; width: 401px; display: grid; gap: 11px; font: 13px/15px Roboto, "Noto Sans CJK JP", sans-serif; font-feature-settings: normal; color: #333; }
.note { height: 44px; background: #fff; border: 1px solid #00983a; border-radius: 5px; display: flex; justify-content: space-between; align-items: center; padding: 0 7px 0 40px; }
.note.big { height: 75px; padding-bottom: 2px; }
.nb { color: #aaa; display: flex; flex-direction: column; align-items: flex-end; gap: 24px; }
.nb button { display: block; }

.menu { position: absolute; left: 875px; top: 409px; width: 251px; padding: 2px 5px; background: #f9f9f9; border: 1px solid #ddd; border-radius: 4px; box-shadow: 0 4px 12px #0003; color: #000; font-size: 12px; }
.menu button { position: relative; display: flex; align-items: center; width: 100%; height: 22px; padding: 0 6px 0 32px; line-height: 20px; border-radius: 3px; white-space: nowrap; }
.menu .hov { background: #f0f0f0; }
.menu button:disabled { color: #a0a0a0; }
.menu hr { border: 0; height: 1px; background: #d4d4d4; margin: 4px 3px; }
.menu kbd { font: inherit; margin-left: auto; margin-right: 13px; }
.menu .r { margin-left: auto; }
.menu .i { position: absolute; left: 2px; top: 4px; color: #777; }
.menu .dk { color: #000; }
.gr { stroke: #00ae42; }
```
